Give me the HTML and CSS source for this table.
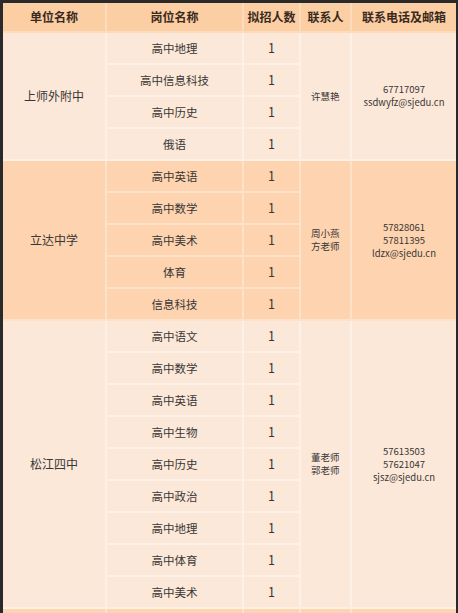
FILE: index.html
```html
<!DOCTYPE html>
<html lang="zh">
<head>
<meta charset="utf-8">
<title>招聘岗位</title>
<link rel="stylesheet" href="styles.css">
</head>
<body>
<div class="frame">
<table class="jobs">
  <colgroup>
    <col class="c1"><col class="c2"><col class="c3"><col class="c4"><col class="c5">
  </colgroup>
  <thead>
    <tr class="head">
      <th>单位名称</th><th>岗位名称</th><th>拟招人数</th><th>联系人</th><th>联系电话及邮箱</th>
    </tr>
  </thead>
  <tbody class="light">
    <tr><td rowspan="4" class="school">上师外附中</td><td>高中地理</td><td class="num">1</td><td rowspan="4" class="person">许慧艳</td><td rowspan="4" class="contact"><div class="ln">67717097</div><div class="ln">ssdwyfz@sjedu.cn</div></td></tr>
    <tr><td>高中信息科技</td><td class="num">1</td></tr>
    <tr><td>高中历史</td><td class="num">1</td></tr>
    <tr><td>俄语</td><td class="num">1</td></tr>
  </tbody>
  <tbody class="dark">
    <tr><td rowspan="5" class="school">立达中学</td><td>高中英语</td><td class="num">1</td><td rowspan="5" class="person"><div class="ln">周小燕</div><div class="ln">方老师</div></td><td rowspan="5" class="contact"><div class="ln">57828061</div><div class="ln">57811395</div><div class="ln">ldzx@sjedu.cn</div></td></tr>
    <tr><td>高中数学</td><td class="num">1</td></tr>
    <tr><td>高中美术</td><td class="num">1</td></tr>
    <tr><td>体育</td><td class="num">1</td></tr>
    <tr><td>信息科技</td><td class="num">1</td></tr>
  </tbody>
  <tbody class="light">
    <tr><td rowspan="9" class="school">松江四中</td><td>高中语文</td><td class="num">1</td><td rowspan="9" class="person"><div class="ln">董老师</div><div class="ln">郭老师</div></td><td rowspan="9" class="contact"><div class="ln">57613503</div><div class="ln">57621047</div><div class="ln">sjsz@sjedu.cn</div></td></tr>
    <tr><td>高中数学</td><td class="num">1</td></tr>
    <tr><td>高中英语</td><td class="num">1</td></tr>
    <tr><td>高中生物</td><td class="num">1</td></tr>
    <tr><td>高中历史</td><td class="num">1</td></tr>
    <tr><td>高中政治</td><td class="num">1</td></tr>
    <tr><td>高中地理</td><td class="num">1</td></tr>
    <tr><td>高中体育</td><td class="num">1</td></tr>
    <tr><td>高中美术</td><td class="num">1</td></tr>
  </tbody>
  <tbody class="dark">
    <tr><td></td><td></td><td></td><td></td><td></td></tr>
  </tbody>
</table>
</div>
</body>
</html>
```
FILE: styles.css
```css
html, body {
  margin: 0;
  padding: 0;
  background: #2a2a2a;
  overflow: hidden;
}
.frame {
  padding: 3px 2px 0 3px;
}
.jobs {
  width: 453px;
  border-collapse: collapse;
  table-layout: fixed;
  font-family: "Noto Sans CJK SC", "Noto Sans", sans-serif;
  color: #3a3634;
}
.c1 { width: 103px; }
.c2 { width: 137px; }
.c3 { width: 57px; }
.c4 { width: 51px; }
.c5 { width: 105px; }
.jobs th, .jobs td {
  padding: 0;
  text-align: center;
  vertical-align: middle;
  border: 2px solid transparent;
  font-size: 11.5px;
  line-height: 14px;
}
.jobs .head th {
  height: 28px;
  background: #fccea3;
  border-color: #fcdcbd;
  border-top: 0;
  font-weight: bold;
  font-size: 12px;
  color: #3a2a1e;
}
.jobs .head th:first-child { border-left: 0; }
.jobs .head th:last-child { border-right: 0; }
.jobs tbody tr td { height: 30px; }
.jobs tbody td:first-child { border-left: 0; }
.jobs tbody td.contact, .jobs tbody tr td:last-child { border-right: 0; }
.jobs .light td {
  background: #fce8d9;
  border-color: #fdf1e7;
}
.jobs .dark td {
  background: #fdd3b0;
  border-color: #fde2c9;
}
.jobs .school {
  font-size: 12px;
}
.jobs .num {
  font-size: 12.5px;
}
.jobs .person {
  font-size: 9.5px;
  line-height: 13px;
  text-align: left;
  padding-left: 10px;
}
.jobs .contact {
  font-size: 9.5px;
  line-height: 13px;
}
.ln {
  height: 13px;
  line-height: 13px;
  overflow: visible;
  white-space: nowrap;
}
```
